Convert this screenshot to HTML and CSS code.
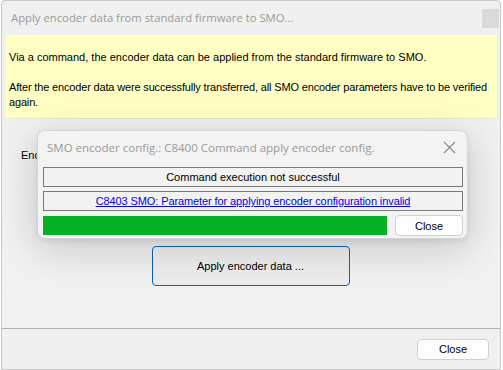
FILE: index.html
```html
<!DOCTYPE html>
<html lang="en">
<head>
  <meta charset="UTF-8" />
  <title>Apply encoder data</title>
  <link rel="stylesheet" href="styles.css">
</head>
<body>
  <div class="window">
    <div class="titlebar">
      <span class="title">Apply encoder data from standard firmware to SMO...</span>
      <span class="title-close"></span>
    </div>

    <div class="hint">
      <p>Via a command, the encoder data can be applied from the standard firmware to SMO.</p>
      <p class="tight">After the encoder data were successfully transferred, all SMO encoder parameters have to be verified again.</p>
    </div>

    <div class="content">
      <div class="enc-label">Enc</div>
      <div class="apply-row">
        <button class="apply-btn">Apply encoder data ...</button>
      </div>

      <!-- popup dialog over the content -->
      <div class="popup">
        <div class="popup-title">
          <span>SMO encoder config.: C8400 Command apply encoder config.</span>
          <svg class="popup-x" width="13" height="13" viewBox="0 0 13 13">
            <path d="M1 1 L12 12 M12 1 L1 12" stroke="#8a8a8a" stroke-width="1.1" fill="none"/>
          </svg>
        </div>
        <div class="status-box">Command execution not successful</div>
        <div class="status-box"><a href="#">C8403 SMO: Parameter for applying encoder configuration invalid</a></div>
        <div class="progress-row">
          <div class="progress"><div class="progress-fill" style="width: 100%"></div></div>
          <button class="btn">Close</button>
        </div>
      </div>
    </div>

    <div class="footer">
      <button class="btn footer-btn">Close</button>
    </div>
  </div>
</body>
</html>
```

FILE: styles.css
```css
body {
  margin: 0;
  background: #ffffff;
  font-family: "Liberation Sans", Arial, sans-serif;
  font-size: 11px;
  color: #000;
}
.window {
  width: 498px;
  height: 368px;
  margin-left: 1px;
  border: 1px solid #c9c9c9;
  border-radius: 4px 4px 0 0;
  background: #f0f0f0;
  display: flex;
  flex-direction: column;
}
.titlebar {
  height: 34px;
  display: flex;
  align-items: center;
  justify-content: space-between;
  padding: 0 9px 0 9px;
}
.title {
  font-family: "Open Sans", sans-serif;
  font-size: 11.3px;
  color: #9a9a9a;
  margin-top: -1px;
}
.title-close {
  width: 17px;
  height: 19px;
  background: #dadada;
  margin-right: -8px;
  margin-top: 1px;
}
.hint {
  background: #ffffc4;
  margin: 0 3px;
  height: 84px;
  padding: 15px 0 0 4px;
  box-sizing: border-box;
  border-bottom: 1px solid #e8e8d0;
}
.hint p {
  margin: 0 0 15px 0;
  line-height: 15px;
}
.hint .tight {
  letter-spacing: -0.16px;
}
.content {
  position: relative;
  flex: 1;
  background: linear-gradient(#f0f0f0, #f2f2f2);
}
.enc-label {
  margin: 30px 0 0 19px;
}
.apply-row {
  display: flex;
  justify-content: center;
  margin-top: 85px;
  padding-right: 1px;
}
.apply-btn {
  width: 198px;
  height: 40px;
  font-family: inherit;
  font-size: 11px;
  background: linear-gradient(#f1f1f1, #ececec);
  border: 1px solid #0a63b8;
  border-radius: 4px;
  color: #000;
}
.popup {
  position: absolute;
  left: 35px;
  top: 11px;
  width: 420px;
  height: 107px;
  padding: 0 4px 0 5px;
  box-sizing: content-box;
  background: #f3f3f3;
  border: 1px solid #d6d6d6;
  border-radius: 8px;
  box-shadow: 0 10px 40px rgba(0, 0, 0, 0.18), 0 2px 6px rgba(0, 0, 0, 0.08);
  display: flex;
  flex-direction: column;
  gap: 4px;
}
.popup-title {
  height: 32px;
  flex-shrink: 0;
  display: flex;
  align-items: center;
  justify-content: space-between;
  font-family: "Open Sans", sans-serif;
  font-size: 11.5px;
  color: #9a9a9a;
  padding: 0 7px 0 4px;
}
.status-box {
  height: 18px;
  flex-shrink: 0;
  border: 1px solid #7a7a7a;
  background: #f2f2f2;
  display: flex;
  align-items: center;
  justify-content: center;
}
.status-box a {
  color: #0000ee;
  letter-spacing: -0.1px;
}
.progress-row {
  display: flex;
  gap: 8px;
  align-items: center;
}
.progress {
  flex: 1;
  height: 19px;
  background: #e6e6e6;
}
.progress-fill {
  height: 100%;
  background: #06b025;
}
.btn {
  width: 68px;
  height: 21px;
  font-family: inherit;
  font-size: 11px;
  background: #fdfdfd;
  border: 1px solid #d0d0d0;
  border-radius: 4px;
  color: #000;
}
.footer {
  height: 40px;
  border-top: 1px solid #b0b0b0;
  display: flex;
  justify-content: flex-end;
  align-items: center;
  padding-right: 11px;
}
.footer-btn {
  width: 72px;
}
```
